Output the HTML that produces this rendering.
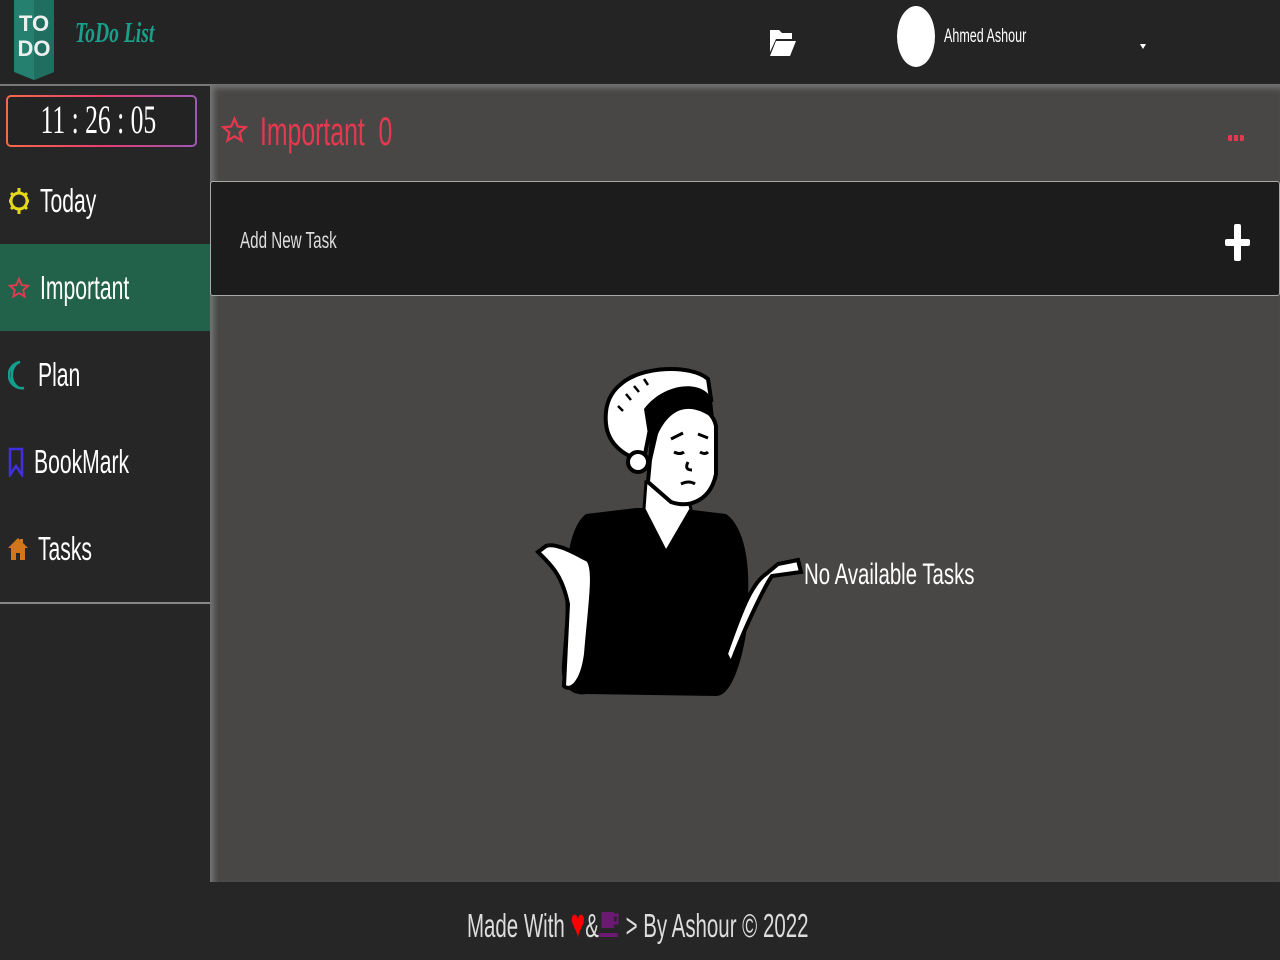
<!DOCTYPE html>
<html><head><meta charset="utf-8">
<style>
*{margin:0;padding:0;box-sizing:border-box}
body{width:1280px;height:960px;background:#262626;font-family:"Liberation Sans",sans-serif;position:relative;overflow:hidden;color:#fff}
.n{display:inline-block;transform:scaleX(.64);transform-origin:left center;white-space:nowrap}
.abs{position:absolute}
#header{left:0;top:0;width:1280px;height:82px;background:#242424}
#main{left:210px;top:84px;width:1070px;height:798px;background:#484746;box-shadow:inset 4px 4px 6px rgba(255,255,255,.25)}
#side{left:0;top:84px;width:210px;height:798px;background:#262626;border-top:2px solid #777}
.item{position:absolute;left:0;width:210px;height:87px;display:flex;align-items:center;font-size:33px}
.item svg{margin-left:8px;margin-right:10px;flex:none}
</style></head><body>
<div id="header" class="abs">
  <svg class="abs" style="left:14px;top:0" width="40" height="80" viewBox="0 0 40 80"><path d="M0 0H40V72L20 80L0 72Z" fill="#26806f"/><path d="M20 0H40V72L20 80Z" fill="#1f6e60"/>
  <text x="20" y="31" text-anchor="middle" font-family="Liberation Sans" font-weight="bold" font-size="22" fill="#eee">TO</text>
  <text x="20" y="56" text-anchor="middle" font-family="Liberation Sans" font-weight="bold" font-size="22" fill="#eee">DO</text></svg>
  <div class="abs" style="left:75px;top:18px;color:#1aa08a;font-family:'Liberation Serif',serif;font-style:italic;font-weight:bold;font-size:28px"><span class="n" style="transform:scaleX(.7)">ToDo List</span></div>
  <svg class="abs" style="left:769px;top:26px" width="28" height="32" viewBox="0 0 28 32"><path d="M1 4h9l3 3h10v6H7L1 26Z" fill="#fff"/><path d="M7 15h20l-6 15H1Z" fill="#fff"/></svg>
  <div class="abs" style="left:897px;top:6px;width:38px;height:61px;border-radius:50%;background:#fff"></div>
  <div class="abs" style="left:944px;top:26px;font-size:19px"><span class="n" style="transform:scaleX(.66)">Ahmed Ashour</span></div>
  <div class="abs" style="left:1140px;top:44px;border-left:3px solid transparent;border-right:3px solid transparent;border-top:5px solid #fff"></div>
</div>
<div id="side" class="abs">
  <div class="abs" style="left:6px;top:9px;width:191px;height:52px;border-radius:5px;padding:2px;background:linear-gradient(90deg,#f56a4a,#e83e70,#9b59b6)">
    <div style="background:#232323;width:100%;height:100%;border-radius:3px;text-align:center;padding-right:16px;font-family:'Liberation Serif',serif;font-size:40px;line-height:46px;color:#fff"><span class="n" style="transform:scaleX(.64);transform-origin:center">11 : 26 : 05</span></div>
  </div>
  <div class="item" style="top:71px"><svg width="22" height="32" viewBox="0 0 22 32"><circle cx="11" cy="16" r="8" fill="none" stroke="#e6d81a" stroke-width="3"/><g stroke="#e6d81a" stroke-width="3"><path d="M11 3v4M11 25v4M1 16h3M18 16h3M3 8l2 2M17 22l2 2M19 8l-2 2M5 22l-2 2"/></g></svg><span class="n">Today</span></div>
  <div class="item" style="top:158px;background:#22624a"><svg width="22" height="30" viewBox="0 0 24 24"><path d="M12 2l2.9 6.9 7.1.6-5.4 4.7 1.6 7.2L12 17.6 5.8 21.4l1.6-7.2L2 9.5l7.1-.6Z" fill="none" stroke="#e63950" stroke-width="2"/></svg><span class="n">Important</span></div>
  <div class="item" style="top:245px"><svg width="20" height="30" viewBox="0 0 20 30"><path d="M12 2A12 12 0 0 0 16 28A10 13 0 0 1 12 2Z" fill="none" stroke="#139e8e" stroke-width="2.5"/></svg><span class="n">Plan</span></div>
  <div class="item" style="top:332px"><svg width="16" height="30" viewBox="0 0 16 30"><path d="M2 2h12v26l-6-9-6 9Z" fill="none" stroke="#4030e0" stroke-width="2.5"/></svg><span class="n">BookMark</span></div>
  <div class="item" style="top:419px"><svg width="20" height="26" viewBox="0 0 20 24"><path d="M10 1L0 11h3v12h5v-7h4v7h5V11h3L15 6V2h-3v1Z" fill="#d2761c"/></svg><span class="n">Tasks</span></div>
  <div class="abs" style="left:0;top:516px;width:210px;height:2px;background:#888"></div>
</div>
<div id="main" class="abs">
  <svg class="abs" style="left:11px;top:28px" width="27" height="36" viewBox="0 0 24 24"><path d="M12 2l2.9 6.9 7.1.6-5.4 4.7 1.6 7.2L12 17.6 5.8 21.4l1.6-7.2L2 9.5l7.1-.6Z" fill="none" stroke="#e63950" stroke-width="2"/></svg>
  <div class="abs" style="left:50px;top:26px;font-size:40px;color:#e63950"><span class="n" style="transform:scaleX(.62)">Important&nbsp; 0</span></div>
  <div class="abs" style="left:1018px;top:51px;width:16px;height:6px;background:repeating-linear-gradient(90deg,#e63950 0 4px,transparent 4px 6px);border-radius:2px"></div>
  <div class="abs" style="left:0;top:97px;width:1070px;height:115px;background:#1c1c1c;border:1px solid #aaa;border-radius:3px">
    <div class="abs" style="left:29px;top:45px;font-size:23px;color:#ddd"><span class="n" style="transform:scaleX(.66)">Add New Task</span></div>
    <div class="abs" style="left:1014px;top:42px;width:25px;height:37px"><div class="abs" style="left:9px;top:0;width:7px;height:37px;background:#fff;border-radius:2px"></div><div class="abs" style="left:0;top:15px;width:25px;height:7px;background:#fff;border-radius:2px"></div></div>
  </div>
  <svg class="abs" style="left:316px;top:280px" width="280" height="340" viewBox="0 0 280 340">
    <path d="M60 150C40 165 38 220 40 250L36 300C34 325 48 332 60 330L190 332C205 332 215 300 220 270L222 230C224 190 215 160 200 150L150 144L110 144Z" fill="#000"/>
    <path d="M20 182C30 178 50 190 62 196C70 206 64 240 60 290C56 320 44 328 38 322L42 240C36 210 24 200 12 188Z" fill="#fff" stroke="#000" stroke-width="4"/>
    <path d="M205 300C220 260 240 220 246 212L275 208L272 196L252 200L240 210C225 220 214 250 200 290Z" fill="#fff" stroke="#000" stroke-width="4"/>
    <path d="M120 118L118 145L140 188L165 145L160 128Z" fill="#fff" stroke="#000" stroke-width="3"/>
    <path d="M95 20C115 2 165 0 182 15L185 35C160 25 135 35 125 60L118 95C100 95 82 80 80 60C78 40 85 28 95 20Z" fill="#fff" stroke="#000" stroke-width="4"/>
    <path d="M128 52C150 32 185 38 190 62L190 110C185 135 165 145 145 138L122 118Z" fill="#fff" stroke="#000" stroke-width="4"/>
    <path d="M118 45C138 18 178 15 186 36L188 55C165 38 145 42 132 70L126 96Z" fill="#000"/>
    <circle cx="112" cy="98" r="10" fill="#fff" stroke="#000" stroke-width="4"/>
    <path d="M100 30l5 6M108 22l5 6M118 15l4 6M92 42l5 5" stroke="#000" stroke-width="2.5"/>
    <path d="M145 75l12-6M172 70l10 4M148 88q6 3 10 0M174 88q5 3 8 0M162 98q-4 8 4 8M155 120q8-4 14 0" stroke="#000" stroke-width="3" fill="none"/>
  </svg>
  <div class="abs" style="left:594px;top:474px;font-size:30px;color:#fff"><span class="n" style="transform:scaleX(.68)">No Available Tasks</span></div>
</div>
<div class="abs" style="left:467px;top:902px;font-size:33px;color:#ddd"><span class="n" style="transform:scaleX(.62)">Made With <span style="color:#f00;font-size:40px">♥</span>&amp;<svg width="34" height="30" viewBox="0 0 34 30" style="vertical-align:-3px"><path d="M4 2h20v16H4Z" fill="#6a1a70"/><path d="M24 5h6v8h-6" fill="none" stroke="#6a1a70" stroke-width="3"/><path d="M0 23h30v4H0Z" fill="#6a1a70"/></svg> &gt; By Ashour © 2022</span></div>
</body></html>
